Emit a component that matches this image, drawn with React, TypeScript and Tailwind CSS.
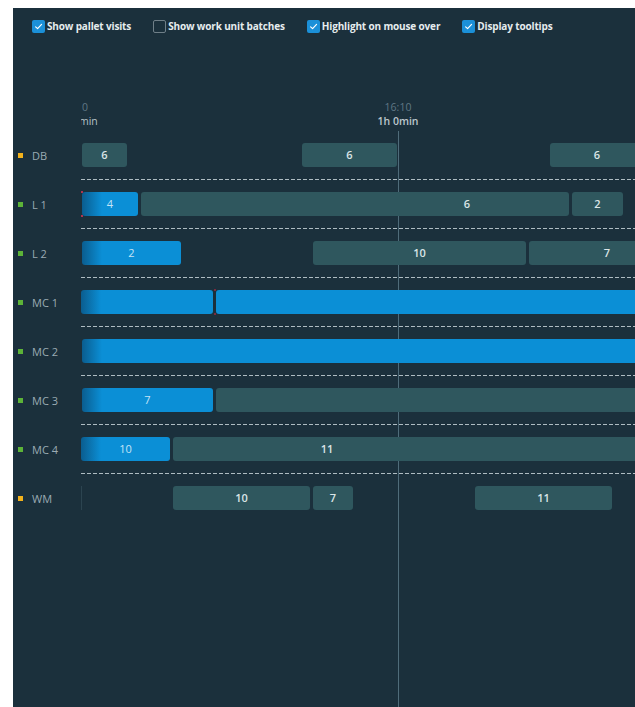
import React from "react";

type Bar = { s: number; e: number; kind: "blue" | "teal"; label?: string; tx?: number; fade?: boolean };
type Row = { name: string; color: "yellow" | "green"; bars: Bar[] };

// chart origin on the page is x = 81; all bar coordinates are relative to it
const rows: Row[] = [
  {
    name: "DB",
    color: "yellow",
    bars: [
      { s: 1, e: 46, kind: "teal", label: "6" },
      { s: 221, e: 316, kind: "teal", label: "6" },
      { s: 469, e: 563, kind: "teal", label: "6" },
    ],
  },
  {
    name: "L 1",
    color: "green",
    bars: [
      { s: 1, e: 57, kind: "blue", label: "4", fade: true },
      { s: 60, e: 488, kind: "teal", label: "6", tx: 386 },
      { s: 491, e: 542, kind: "teal", label: "2" },
    ],
  },
  {
    name: "L 2",
    color: "green",
    bars: [
      { s: 1, e: 100, kind: "blue", label: "2", fade: true },
      { s: 232, e: 445, kind: "teal", label: "10" },
      { s: 448, e: 604, kind: "teal", label: "7" },
    ],
  },
  {
    name: "MC 1",
    color: "green",
    bars: [
      { s: 0, e: 132, kind: "blue", fade: true },
      { s: 135, e: 620, kind: "blue" },
    ],
  },
  {
    name: "MC 2",
    color: "green",
    bars: [{ s: 1, e: 620, kind: "blue", fade: true }],
  },
  {
    name: "MC 3",
    color: "green",
    bars: [
      { s: 1, e: 132, kind: "blue", label: "7", fade: true },
      { s: 135, e: 620, kind: "teal" },
    ],
  },
  {
    name: "MC 4",
    color: "green",
    bars: [
      { s: 0, e: 89, kind: "blue", label: "10", fade: true },
      { s: 92, e: 620, kind: "teal", label: "11", tx: 246 },
    ],
  },
  {
    name: "WM",
    color: "yellow",
    bars: [
      { s: 92, e: 229, kind: "teal", label: "10" },
      { s: 232, e: 272, kind: "teal", label: "7" },
      { s: 394, e: 531, kind: "teal", label: "11" },
    ],
  },
];

const options = [
  { label: "Show pallet visits", checked: true },
  { label: "Show work unit batches", checked: false },
  { label: "Highlight on mouse over", checked: true },
  { label: "Display tooltips", checked: true },
];

function CheckBox({ checked }: { checked: boolean }) {
  if (!checked) {
    return <span className="w-[13px] h-[13px] rounded-[2px] border border-[#6f7f88] shrink-0" />;
  }
  return (
    <span className="w-[13px] h-[13px] rounded-[2px] bg-[#1b90d8] flex items-center justify-center shrink-0">
      <svg width="9" height="9" viewBox="0 0 10 10" fill="none">
        <path d="M1.8 5.4 L4 7.4 L8.4 2.6" stroke="#ffffff" strokeWidth="1.3" strokeLinecap="round" strokeLinejoin="round" />
      </svg>
    </span>
  );
}

function BarView({ bar }: { bar: Bar }) {
  const base =
    bar.kind === "blue"
      ? bar.fade
        ? "bg-[linear-gradient(to_right,#0a5d8f,#0b8fd6_20px)] text-[#c4e4f7] font-normal"
        : "bg-[#0b8fd6] text-[#c4e4f7] font-normal"
      : "bg-[#2f575e] text-[#dbe5e7] font-semibold";
  const w = bar.e - bar.s;
  const tx = bar.tx !== undefined ? bar.tx - bar.s : w / 2;
  return (
    <div
      className={`absolute top-[12px] h-[24px] rounded-[3px] ${base}`}
      style={{ left: bar.s, width: w }}
    >
      {bar.label && (
        <span
          className="absolute top-0 leading-[24px] text-[11px] -translate-x-1/2 whitespace-nowrap"
          style={{ left: tx }}
        >
          {bar.label}
        </span>
      )}
    </div>
  );
}

export default function App() {
  return (
    <div className="min-h-screen bg-white pl-[13px] pt-[8px] font-['Open_Sans',sans-serif]">
      <div className="h-[699px] bg-[#1b303c] flex flex-col overflow-hidden">
        {/* option toggles */}
        <div className="h-[34px] flex items-center pt-[2px] pl-[19px] gap-[22px] shrink-0">
          {options.map((o) => (
            <label key={o.label} className="flex items-center gap-[2px]">
              <CheckBox checked={o.checked} />
              <span className="text-[10px] font-bold tracking-[-0.15px] text-[#e6ecee] leading-none">{o.label}</span>
            </label>
          ))}
        </div>

        <div className="flex flex-1">
          {/* resource names */}
          <div className="w-[68px] shrink-0 flex flex-col pt-[89px]">
            {rows.map((r) => (
              <div key={r.name} className="h-[49px] flex items-center pl-[5px] gap-[9px]">
                <span
                  className={`w-[5px] h-[5px] ${r.color === "yellow" ? "bg-[#f2b21c]" : "bg-[#5cb338]"}`}
                />
                <span className="text-[11px] text-[#9aabb3] leading-none">{r.name}</span>
              </div>
            ))}
          </div>

          {/* timeline */}
          <div className="relative flex-1 overflow-hidden">
            <div className="relative h-[89px]">
              <div className="absolute left-[1px] top-[58px] text-[10.5px] leading-[14px]">
                <div className="text-[#5f7784]">0</div>
                <div className="text-[#b3c0c6] -ml-[3px]">min</div>
              </div>
              <div className="absolute left-[317px] top-[58px] -translate-x-1/2 text-center text-[10.5px] leading-[14px]">
                <div className="text-[#5f7784]">16:10</div>
                <div className="text-[#bcc7cc] font-semibold">1h 0min</div>
              </div>
            </div>

            <div className="absolute left-[317px] top-[89px] bottom-0 w-px bg-[#4f6c7a]" />

            {rows.map((r, i) => (
              <div key={r.name} className="relative h-[49px]">
                {r.bars.map((b, j) => (
                  <BarView key={j} bar={b} />
                ))}
                {r.name === "L 1" && (
                  <>
                    <span className="absolute left-0 top-[11px] w-[2px] h-[2px] bg-[#b0334f]" />
                    <span className="absolute left-0 top-[35px] w-[2px] h-[2px] bg-[#b0334f]" />
                  </>
                )}
                {r.name === "MC 1" && (
                  <>
                    <span className="absolute left-[133px] top-[11px] w-[2px] h-[2px] bg-[#7a2a3e]" />
                    <span className="absolute left-[133px] top-[35px] w-[2px] h-[2px] bg-[#7a2a3e]" />
                  </>
                )}
                {r.name === "WM" && (
                  <span className="absolute left-0 top-[12px] h-[24px] w-px bg-[#2c4450]" />
                )}
                {i < rows.length - 1 && (
                  <div className="absolute left-0 right-0 bottom-0 h-px bg-[repeating-linear-gradient(to_right,#aebcc2_0_4px,transparent_4px_6px)]" />
                )}
              </div>
            ))}
          </div>
        </div>
      </div>
    </div>
  );
}
